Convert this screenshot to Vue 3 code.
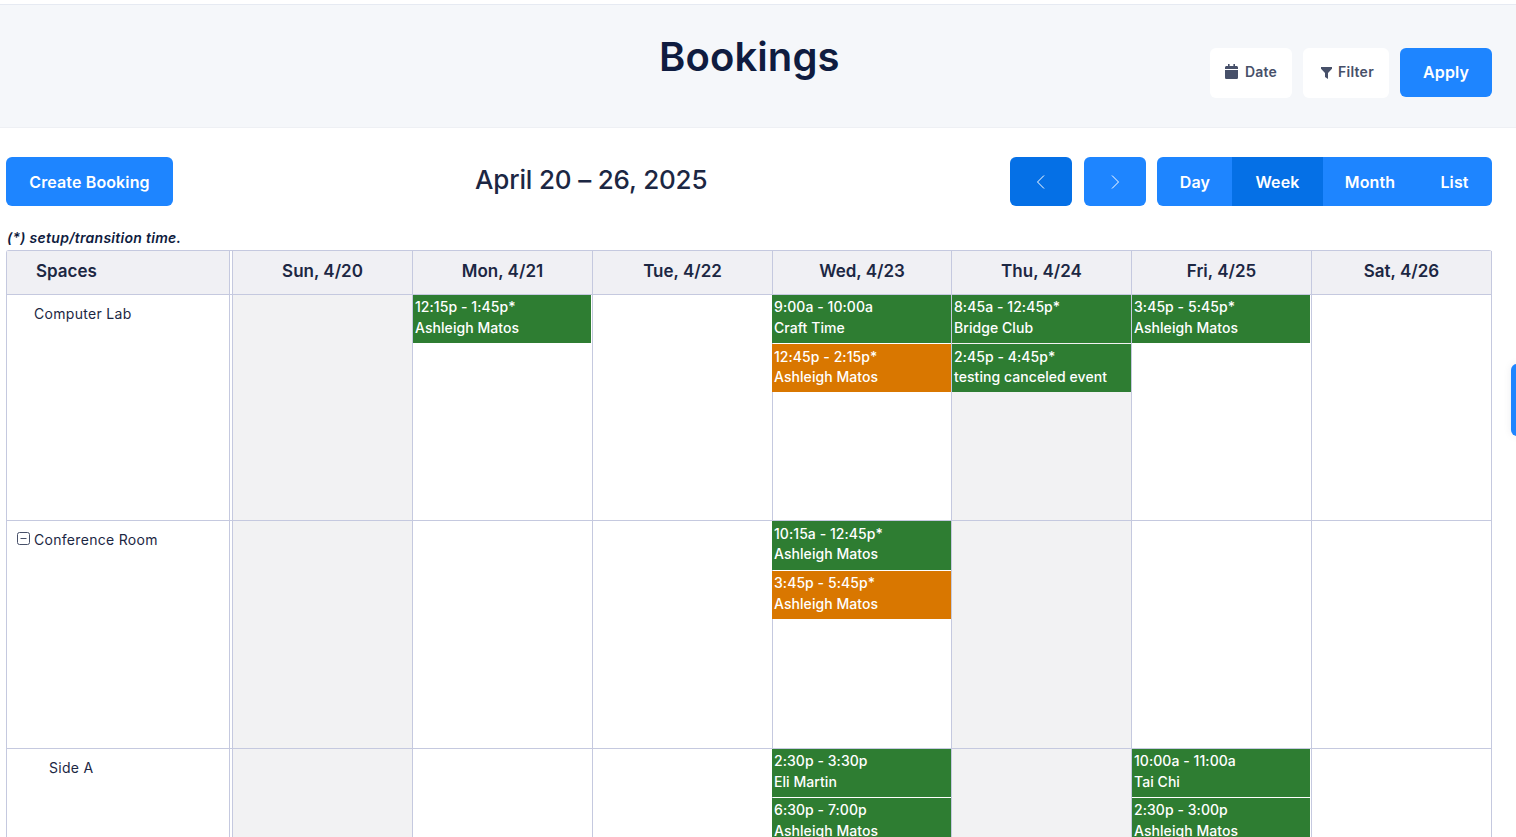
<script setup>
const days = ['Sun, 4/20', 'Mon, 4/21', 'Tue, 4/22', 'Wed, 4/23', 'Thu, 4/24', 'Fri, 4/25', 'Sat, 4/26']
const g = 'green'
const o = 'orange'
const rows = [
  {
    name: 'Computer Lab', cls: 'r1', toggle: false, indent: 'i1',
    cells: [
      { shade: true, ev: [] },
      { ev: [{ t: '12:15p - 1:45p*', n: 'Ashleigh Matos', c: g }] },
      { ev: [] },
      { ev: [{ t: '9:00a - 10:00a', n: 'Craft Time', c: g }, { t: '12:45p - 2:15p*', n: 'Ashleigh Matos', c: o }] },
      { shade: true, ev: [{ t: '8:45a - 12:45p*', n: 'Bridge Club', c: g }, { t: '2:45p - 4:45p*', n: 'testing canceled event', c: g }] },
      { ev: [{ t: '3:45p - 5:45p*', n: 'Ashleigh Matos', c: g }] },
      { ev: [] },
    ],
  },
  {
    name: 'Conference Room', cls: 'r2', toggle: true, indent: 'i1',
    cells: [
      { shade: true, ev: [] },
      { ev: [] },
      { ev: [] },
      { ev: [{ t: '10:15a - 12:45p*', n: 'Ashleigh Matos', c: g }, { t: '3:45p - 5:45p*', n: 'Ashleigh Matos', c: o }] },
      { shade: true, ev: [] },
      { ev: [] },
      { ev: [] },
    ],
  },
  {
    name: 'Side A', cls: 'r3', toggle: false, indent: 'i2',
    cells: [
      { shade: true, ev: [] },
      { ev: [] },
      { ev: [] },
      { ev: [{ t: '2:30p - 3:30p', n: 'Eli Martin', c: g }, { t: '6:30p - 7:00p', n: 'Ashleigh Matos', c: g }] },
      { shade: true, ev: [] },
      { ev: [{ t: '10:00a - 11:00a', n: 'Tai Chi', c: g }, { t: '2:30p - 3:00p', n: 'Ashleigh Matos', c: g }] },
      { ev: [] },
    ],
  },
]
</script>

<template>
  <div class="page">
    <header class="hero">
      <h1 class="title">Bookings</h1>
      <div class="hero-actions">
        <button class="ghost date-btn">
          <svg class="ico" width="13" height="15" viewBox="0 0 13 15" fill="#475069">
            <path d="M3 0h1.600v2h3.800V0H10v2h1.400c.9 0 1.600.7 1.600 1.500v1.500H0V3.500C0 2.700.7 2 1.600 2H3zM0 6h13v7.400c0 .9-.7 1.600-1.600 1.600H1.600C.7 15 0 14.300 0 13.400z" />
          </svg>
          <span>Date</span>
        </button>
        <button class="ghost filter-btn">
          <svg class="ico" width="11" height="12" viewBox="0 0 11 12" fill="#475069">
            <path d="M0 0h11v1.800L7 6v6L4 10V6L0 1.800z" />
          </svg>
          <span>Filter</span>
        </button>
        <button class="blue apply">Apply</button>
      </div>
    </header>

    <section class="toolbar">
      <button class="blue create">Create Booking</button>
      <h2 class="range">April 20 – 26, 2025</h2>
      <div class="nav">
        <button class="blue arrow active">
          <svg width="10" height="14" viewBox="0 0 10 14" fill="none" stroke="#fff" stroke-width="1"><path d="M8 .5 1.500 7 8 13.500" /></svg>
        </button>
        <button class="blue arrow">
          <svg width="10" height="14" viewBox="0 0 10 14" fill="none" stroke="#fff" stroke-width="1"><path d="M2 .5 8.500 7 2 13.500" /></svg>
        </button>
        <div class="views">
          <button class="blue v-day">Day</button>
          <button class="blue v-week active">Week</button>
          <button class="blue v-month">Month</button>
          <button class="blue v-list">List</button>
        </div>
      </div>
    </section>

    <p class="note">(*) setup/transition time.</p>

    <div class="table">
      <div class="head spaces">Spaces</div>
      <div v-for="d in days" :key="d" class="head day">{{ d }}</div>
      <template v-for="r in rows" :key="r.name">
        <div class="space" :class="[r.cls, r.indent]">
          <svg v-if="r.toggle" class="toggle" width="13" height="13" viewBox="0 0 13 13" fill="none" stroke="#475069">
            <rect x=".5" y=".5" width="12" height="12" rx="2" />
            <path d="M3.500 6.500h6" />
          </svg>
          <span>{{ r.name }}</span>
        </div>
        <div v-for="(c, i) in r.cells" :key="i" class="cell" :class="[r.cls, 'col' + i, { shade: c.shade }]">
          <div v-for="e in c.ev" :key="e.t" class="event" :class="e.c">
            <span>{{ e.t }}</span>
            <span>{{ e.n }}</span>
          </div>
        </div>
      </template>
    </div>

    <div class="side-tab"></div>
  </div>
</template>

<style>
html, body { margin: 0; background: #fff; overflow: hidden; }
</style>

<style scoped>
.page {
  position: relative;
  width: 1516px;
  height: 837px;
  overflow: hidden;
  background: #fff;
  font-family: Inter, "Liberation Sans", sans-serif;
  color: #1c2743;
}
button { font-family: inherit; border: 0; cursor: pointer; padding: 0; }
.hero {
  height: 122px;
  margin-top: 4px;
  border-top: 1px solid #e6eaf2;
  border-bottom: 1px solid #eef0f4;
  background: #f5f7fa;
  display: flex;
  align-items: flex-start;
  position: relative;
}
.title {
  margin: 28px 0 0 659px;
  font-size: 40px;
  line-height: 48px;
  letter-spacing: .1px;
  font-weight: 600;
  color: #0f1c40;
}
.hero-actions {
  position: absolute;
  left: 1210px;
  top: 43px;
  display: flex;
  gap: 11px;
}
.ghost {
  height: 50px;
  background: #fff;
  border-radius: 6px;
  font-size: 14px;
  font-weight: 600;
  letter-spacing: .25px;
  color: #475069;
  display: flex;
  align-items: center;
  justify-content: center;
  gap: 7px;
}
.ghost span { margin-top: -4px; }
.date-btn .ico { margin-top: -4px; }
.filter-btn .ico { margin-top: -1px; }
.date-btn { width: 82px; }
.filter-btn { width: 86px; gap: 6px; padding-left: 3px; }
.blue {
  background: #1e85ff;
  color: #fff;
  font-weight: 600;
  font-size: 16px;
  letter-spacing: .12px;
}
.apply { width: 92px; height: 49px; border-radius: 6px; padding-bottom: 2px; }
.toolbar {
  margin-top: 29px;
  height: 49px;
  padding: 0 24px 0 6px;
  display: flex;
  align-items: flex-start;
}
.create { width: 167px; height: 49px; border-radius: 6px; }
.range {
  margin: 5px 0 0 302px;
  font-size: 26px;
  line-height: 36px;
  letter-spacing: -.17px;
  font-weight: 500;
  color: #1c2743;
  white-space: nowrap;
}
.nav { margin-left: auto; display: flex; }
.arrow {
  width: 62px;
  height: 49px;
  border-radius: 6px;
  margin-right: 12px;
  display: flex;
  align-items: center;
  justify-content: center;
}
.arrow:nth-child(2) { margin-right: 11px; }
.blue.active { background: #0570e6; }
.views { display: flex; height: 49px; border-radius: 6px; overflow: hidden; }
.views button { height: 49px; }
.v-day { width: 75px; padding-left: 1px; }
.v-week { width: 91px; }
.v-month { width: 94px; }
.v-list { width: 75px; }
.note {
  margin: 22px 0 0 7px;
  height: 20px;
  font-size: 14px;
  line-height: 20px;
  letter-spacing: .28px;
  font-weight: 600;
  font-style: italic;
  color: #0f1c40;
}
.table {
  margin: 2px 0 0 6px;
  width: 1486px;
  display: grid;
  grid-template-columns: 226px 180px 180px 180px 179px 180px 180px 180px;
  grid-template-rows: 44px 226px 228px 228px;
  border-top: 1px solid #c5c9df;
  border-left: 1px solid #c5c9df;
  border-radius: 3px 3px 0 0;
  box-sizing: border-box;
}
.head {
  background: #f0f0f4;
  border-right: 1px solid #c5c9df;
  border-bottom: 1px solid #c5c9df;
  font-size: 17px;
  font-weight: 600;
  color: #1c2743;
  display: flex;
  align-items: center;
  padding-bottom: 4px;
  box-sizing: border-box;
}
.day { justify-content: center; }
.spaces { padding-left: 29px; }
.spaces, .space { box-shadow: inset -2px 0 0 #fff, inset -3px 0 0 #c5c9df; }
.space {
  border-bottom: 1px solid #c5c9df;
  border-right: 1px solid #c5c9df;
  font-size: 14px;
  line-height: 20px;
  letter-spacing: .3px;
  color: #1c2743;
  box-sizing: border-box;
  display: flex;
  align-items: flex-start;
  padding-top: 9px;
}
.i1 { padding-left: 27px; }
.i2 { padding-left: 42px; }
.toggle { margin: 2px 4px 0 -17px; flex: none; }
.cell {
  border-right: 1px solid #c5c9df;
  border-bottom: 1px solid #c5c9df;
  box-sizing: border-box;
  background: #fff;
  display: flex;
  flex-direction: column;
  gap: 1px;
}
.cell.shade { background: #f2f2f3; }
.event {
  height: 48px;
  flex: none;
  padding: 1px 0 0 2px;
  box-sizing: border-box;
  color: #fff;
  font-size: 14px;
  line-height: 21px;
  letter-spacing: .06px;
  font-weight: 500;
  display: flex;
  flex-direction: column;
}
.r2 .event:first-child { height: 49px; }
.r1 .event:nth-child(2), .r2 .event:first-child { padding-top: 3px; }
.r1 .event:nth-child(2) span:first-child, .r2 .event:first-child span:first-child { line-height: 19px; }
.col1 .event, .col5 .event { margin-right: 1px; }
.col3 .event { margin-left: -1px; }
.green { background: #2e7d32; }
.orange { background: #d97700; }
.side-tab {
  position: absolute;
  left: 1511px;
  top: 364px;
  width: 12px;
  height: 72px;
  border-radius: 6px 0 0 6px;
  background: #1e85ff;
  box-shadow: 0 0 8px rgba(30, 40, 70, .08);
}
</style>
